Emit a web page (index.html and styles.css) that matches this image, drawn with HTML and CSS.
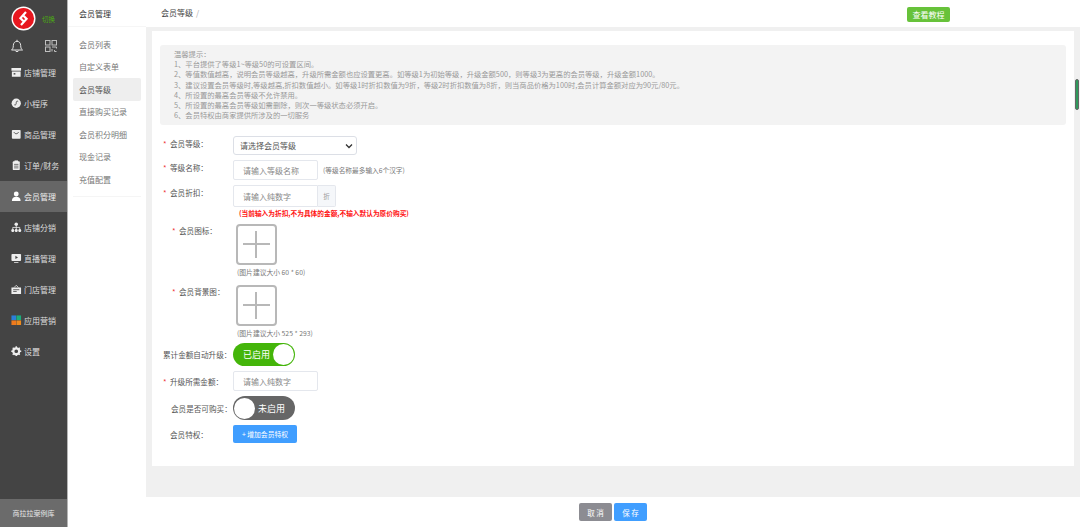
FILE: index.html
```html
<!DOCTYPE html>
<html lang="zh-CN">
<head>
<meta charset="utf-8">
<title>会员等级</title>
<link rel="stylesheet" href="styles.css">
</head>
<body>
<div class="app">
  <aside class="side">
    <div class="brand">
      <svg class="logo" viewBox="0 0 26 26"><circle cx="13" cy="13" r="12.5" fill="#fff"/><circle cx="13" cy="13" r="11" fill="#e8171f"/><path d="M15.6 6.2 9.8 12.6 13 15.8M10.4 19.8 16.2 13.400 13 10.200" fill="none" stroke="#fff" stroke-width="2.300"/></svg>
      <span class="switch">切换</span>
    </div>
    <div class="tools">
      <svg class="tool" viewBox="0 0 14 14"><path d="M1.500 11c1.200-1 1.800-2 1.800-4.500C3.300 4 5 2.300 7 2.300s3.700 1.700 3.700 4.200c0 2.500.6 3.500 1.800 4.500ZM5.300 11.500c.3 1.500 3.100 1.500 3.400 0M7 .8v1.500" fill="none" stroke="#e6e6e6" stroke-width="1"/></svg>
      <svg class="tool" viewBox="0 0 14 14"><g fill="none" stroke="#c0c0c0" stroke-width="1"><rect x="1.500" y="1.500" width="4.500" height="4.500"/><rect x="8" y="1.500" width="4.500" height="4.500"/><rect x="1.500" y="8" width="4.500" height="4.500"/><path d="M8 8h4.500v1.500M8 10v2.500M10.500 11v1.500h2"/></g></svg>
    </div>
    <nav class="menu">
      <a class="menu-item"><svg class="ico" viewBox="0 0 12 12"><path d="M.5 1h11v3.200H.5ZM1 5h10v6H1Z" fill="#eee"/><rect x="3" y="7" width="2" height="1.600" fill="#444"/></svg>店铺管理</a>
      <a class="menu-item"><svg class="ico" viewBox="0 0 12 12"><circle cx="6" cy="6" r="5.300" fill="#eee"/><path d="M3.800 7.800c1.700 1 2.200-1 2.200-2.500s1-2.300 2.200-1.200" fill="none" stroke="#444" stroke-width="1"/></svg>小程序</a>
      <a class="menu-item"><svg class="ico" viewBox="0 0 12 12"><rect x="1" y="1" width="10" height="10" rx="1" fill="#eee"/><path d="M3.500 3.500c.5 2.500 4.500 2.500 5 0" fill="none" stroke="#444" stroke-width="1"/></svg>商品管理</a>
      <a class="menu-item"><svg class="ico" viewBox="0 0 12 12"><rect x="2" y="1.500" width="8" height="10" rx="1" fill="#eee"/><rect x="4" y=".5" width="4" height="2" fill="#eee"/><path d="M3.500 5h5M3.500 7h5M3.500 9h5" stroke="#444" stroke-width=".8"/></svg>订单/财务</a>
      <a class="menu-item is-active"><svg class="ico" viewBox="0 0 12 12"><circle cx="6" cy="3.500" r="2.800" fill="#fff"/><path d="M1 11.500c0-3.500 2-5 5-5s5 1.500 5 5Z" fill="#fff"/></svg>会员管理</a>
      <a class="menu-item"><svg class="ico" viewBox="0 0 12 12"><g fill="#eee"><circle cx="6" cy="2.500" r="2"/><circle cx="2" cy="9.800" r="1.700"/><circle cx="6" cy="9.800" r="1.700"/><circle cx="10" cy="9.800" r="1.700"/></g><path d="M6 4v5M2 8V6.200h8V8" fill="none" stroke="#eee" stroke-width=".9"/></svg>店铺分销</a>
      <a class="menu-item"><svg class="ico" viewBox="0 0 12 12"><rect x=".5" y="1" width="11" height="8" rx="1" fill="#eee"/><path d="M5 3.200 8 5 5 6.800Z" fill="#444"/><path d="M3.500 11h5" stroke="#eee" stroke-width="1"/></svg>直播管理</a>
      <a class="menu-item"><svg class="ico" viewBox="0 0 12 12"><path d="M.5 4h11v7.500H.5Z" fill="#eee"/><path d="M3.500 4 6 1.500 8.500 4" fill="none" stroke="#eee" stroke-width=".9"/><path d="M2.500 6.500h7M2.500 8.500h4" stroke="#444" stroke-width=".9"/></svg>门店管理</a>
      <a class="menu-item"><svg class="ico" viewBox="0 0 12 12"><rect x=".5" y=".5" width="5.300" height="5.300" fill="#2b7fd9"/><rect x="6.200" y=".5" width="5.300" height="5.300" fill="#1cae7c"/><rect x=".5" y="6.200" width="5.300" height="5.300" fill="#ee7a1d"/><rect x="6.200" y="6.200" width="5.300" height="5.300" fill="#ee8a1d"/></svg>应用营销</a>
      <a class="menu-item"><svg class="ico" viewBox="0 0 12 12"><circle cx="6" cy="6" r="3.400" fill="none" stroke="#eee" stroke-width="2.600"/><path d="M6 .3v2M6 9.700v2M.3 6h2M9.700 6h2M2 2l1.400 1.400M8.600 8.600 10 10M2 10l1.400-1.400M8.600 3.400 10 2" stroke="#eee" stroke-width="1.600"/></svg>设置</a>
    </nav>
    <div class="side-foot">商拉拉案例库</div>
  </aside>

  <aside class="subnav">
    <div class="subnav-title">会员管理</div>
    <ul class="subnav-list">
      <li class="subnav-item">会员列表</li>
      <li class="subnav-item">自定义表单</li>
      <li class="subnav-item is-active">会员等级</li>
      <li class="subnav-item">直接购买记录</li>
      <li class="subnav-item">会员积分明细</li>
      <li class="subnav-item">现金记录</li>
      <li class="subnav-item">充值配置</li>
    </ul>
  </aside>

  <main class="main">
    <header class="topbar">
      <div class="crumb">会员等级<span class="crumb-sep">/</span></div>
      <a class="tutorial">查看教程</a>
    </header>
    <section class="card">
      <div class="tips">
        <p>温馨提示：</p>
        <p>1、平台提供了等级1~等级50的可设置区间。</p>
        <p>2、等值数值越高，说明会员等级越高，升级所需金额也应设置更高。如等级1为初始等级，升级金额500，则等级3为更高的会员等级，升级金额1000。</p>
        <p>3、建议设置会员等级时,等级越高,折扣数值越小。如等级1时折扣数值为9折，等级2时折扣数值为8折，则当商品价格为100时,会员计算金额对应为90元/80元。</p>
        <p>4、所设置的最高会员等级不允许禁用。</p>
        <p>5、所设置的最高会员等级如需删除，则次一等级状态必须开启。</p>
        <p>6、会员特权由商家提供所涉及的一切服务</p>
      </div>
      <form class="form">
        <div class="row">
          <label class="label"><i class="req">*</i>会员等级：</label>
          <div class="select">请选择会员等级<svg class="chev" viewBox="0 0 8 6"><path d="M1 1.500 4 4.500 7 1.500" fill="none" stroke="#333" stroke-width="1.300"/></svg></div>
        </div>
        <div class="row">
          <label class="label"><i class="req">*</i>等级名称：</label>
          <div class="input">请输入等级名称</div>
          <span class="hint">(等级名称最多输入6个汉字)</span>
        </div>
        <div class="row">
          <label class="label"><i class="req">*</i>会员折扣：</label>
          <div class="group"><div class="input input-tall">请输入纯数字</div><span class="addon">折</span></div>
        </div>
        <div class="note">(当前输入为折扣,不为具体的金额,不输入默认为原价购买)</div>
        <div class="row row-upload">
          <label class="label label-indent"><i class="req">*</i>会员图标：</label>
          <div class="upload-wrap">
            <div class="upload"></div>
            <div class="caption">(图片建议大小 60 * 60)</div>
          </div>
        </div>
        <div class="row row-upload row-last-upload">
          <label class="label label-indent"><i class="req">*</i>会员背景图：</label>
          <div class="upload-wrap">
            <div class="upload"></div>
            <div class="caption">(图片建议大小 525 * 293)</div>
          </div>
        </div>
        <div class="row row-center">
          <label class="label label-flush">累计金额自动升级：</label>
          <div class="toggle toggle-on">已启用<span class="knob"></span></div>
        </div>
        <div class="row row-center">
          <label class="label"><i class="req">*</i>升级所需金额：</label>
          <div class="input">请输入纯数字</div>
        </div>
        <div class="row row-center">
          <label class="label label-buy">会员是否可购买：</label>
          <div class="toggle toggle-off"><span class="knob"></span>未启用</div>
        </div>
        <div class="row row-center">
          <label class="label label-perk">会员特权：</label>
          <a class="add">+ 增加会员特权</a>
        </div>
      </form>
    </section>
    <footer class="actions">
      <a class="btn btn-cancel">取 消</a>
      <a class="btn btn-save">保 存</a>
    </footer>
    <div class="thumb"></div>
  </main>
</div>
</body>
</html>
```

FILE: styles.css
```css
* { box-sizing: border-box; }
html, body { margin: 0; height: 100%; overflow: hidden; }
body {
  font-family: "Noto Sans CJK SC", "Noto Sans", sans-serif;
  font-size: 8px;
  color: #555;
  background: #f0f0f0;
}
p, ul { margin: 0; padding: 0; }
i { font-style: normal; }

.app { display: flex; height: 527px; }

/* Primary sidebar */
.side {
  width: 68px;
  flex: none;
  display: flex;
  flex-direction: column;
  background: #444;
  border-right: 1px solid #b5b5b5;
  color: #ddd;
}
.brand { display: flex; align-items: center; height: 38px; padding: 0 0 1px 11px; }
.logo { width: 25px; height: 25px; flex: none; }
.switch { margin-left: 6px; font-size: 6.500px; color: #4cae12; }
.tools { display: flex; justify-content: space-between; align-items: center; height: 19px; padding: 0 9px 3px 10px; }
.tool { width: 14px; height: 14px; }
.menu { flex: 1; display: flex; flex-direction: column; }
.menu-item { height: 31px; display: flex; align-items: center; padding: 0 0 1px 11px; gap: 2.500px; }
.menu-item.is-active { background: #666; color: #eee; }
.ico { width: 10.500px; height: 10.500px; flex: none; }
.side-foot { height: 28px; background: #6b6b6b; display: flex; align-items: center; justify-content: center; font-size: 7px; color: #e8e8e8; }

/* Secondary nav */
.subnav { width: 78px; flex: none; background: #fff; padding: 0 5px; }
.subnav-title { height: 27px; display: flex; align-items: center; color: #333; border-bottom: 1px solid #f6f6f6; margin: 0 -5px; padding-left: 11px; }
.subnav-list { list-style: none; padding: 6px 0 5px; border-bottom: 1px solid #f5f5f5; }
.subnav-item { height: 22.500px; display: flex; align-items: center; padding-left: 6px; border-radius: 2px; color: #777; }
.subnav-item.is-active { background: #eee; color: #555; }

/* Main column */
.main { position: relative; flex: 1; min-width: 0; display: flex; flex-direction: column; }
.topbar { height: 27px; background: #fff; display: flex; align-items: center; padding: 0 130px 2px 15px; justify-content: space-between; }
.crumb { color: #444; }
.crumb-sep { margin-left: 3px; color: #aaa; }
.tutorial { background: #67c23a; color: #fff; width: 43px; height: 15px; border-radius: 2px; display: flex; align-items: center; justify-content: center; position: relative; top: 2px; }

.card { margin: 4px 6px 0; height: 435px; background: #fff; padding: 14px 8px 0; }
.tips { height: 80px; background: #f3f3f3; border-radius: 3px; padding: 4px 14px; font-size: 7.300px; line-height: 10.200px; color: #999; }

.form { display: flex; flex-direction: column; gap: 5px; margin-top: 11px; }
.row { display: flex; align-items: flex-start; }
.row-last-upload { margin-bottom: 1px; }
.row-upload + .row-upload { margin-top: 4px; }
.row-center { align-items: center; }

.label { width: 73px; flex: none; padding: 1px 0 0 3px; line-height: 14px; font-size: 7.600px; color: #555; white-space: nowrap; }
.req { color: #e33; display: inline-block; width: 7px; }
.row-upload .label { padding-top: 0; }
.label-indent { padding-left: 12px; }
.label-buy { padding-left: 11px; }
.label-perk { padding-left: 10px; }

.select { width: 124px; height: 19px; border: 1px solid #dcdfe6; border-radius: 3px; display: flex; align-items: center; justify-content: space-between; padding: 0 3px 0 6px; color: #555; }
.chev { width: 8px; height: 6px; }
.input { width: 85px; height: 20px; border: 1px solid #e4e7ed; border-radius: 2px; display: flex; align-items: center; padding-left: 9px; color: #888; }
.input-tall { height: 22px; border-radius: 2px 0 0 2px; }
.group { display: flex; }
.addon { width: 18px; height: 22px; background: #f5f7fa; border: 1px solid #e4e7ed; border-left: 0; border-radius: 0 2px 2px 0; display: flex; align-items: center; justify-content: center; font-size: 6.500px; color: #999; }
.hint { margin-left: 5px; align-self: center; font-size: 6.700px; color: #777; }
.note { margin: -5px 0 -1px 79px; height: 13px; line-height: 13px; font-size: 6.700px; font-weight: 700; color: #f11; white-space: nowrap; }

.upload-wrap { margin-left: 3px; }
.upload { position: relative; width: 41px; height: 41px; border: 2px solid #b8b8b8; border-radius: 4px; }
.upload::before, .upload::after { content: ""; position: absolute; background: #b8b8b8; }
.upload::before { left: 5px; right: 5px; top: 17px; height: 2px; }
.upload::after { top: 5px; bottom: 5px; left: 17px; width: 2px; }
.caption { margin-left: 1px; height: 11px; line-height: 15px; font-size: 6.800px; color: #777; white-space: nowrap; }

.toggle { position: relative; width: 62px; border-radius: 12px; display: flex; align-items: center; color: #fff; font-size: 9px; }
.toggle-on { height: 23px; background: #44b50a; padding-left: 10px; }
.toggle-off { height: 24px; background: #666; justify-content: flex-end; padding-right: 10px; }
.knob { position: absolute; top: 1px; width: 21px; height: 21px; border-radius: 50%; background: #fff; }
.toggle-on .knob { right: 1px; }
.toggle-off .knob { left: 1px; top: 1.500px; }

.add { width: 64px; height: 18px; background: #409eff; color: #fff; border-radius: 2px; display: flex; align-items: center; justify-content: center; font-size: 6.800px; }

.actions { margin-top: 31px; flex: 1; background: #fff; display: flex; align-items: flex-start; justify-content: center; gap: 2px; padding-top: 6px; }
.btn { width: 33px; height: 18px; border-radius: 2px; display: flex; align-items: center; justify-content: center; color: #fff; font-size: 7.500px; }
.btn-cancel { background: #8c8c92; }
.btn-save { background: #409eff; }

.thumb { position: absolute; right: 1px; top: 79px; width: 4px; height: 31px; border-radius: 2px; background: #2f9a5c; border: 1px solid #666; }
```
